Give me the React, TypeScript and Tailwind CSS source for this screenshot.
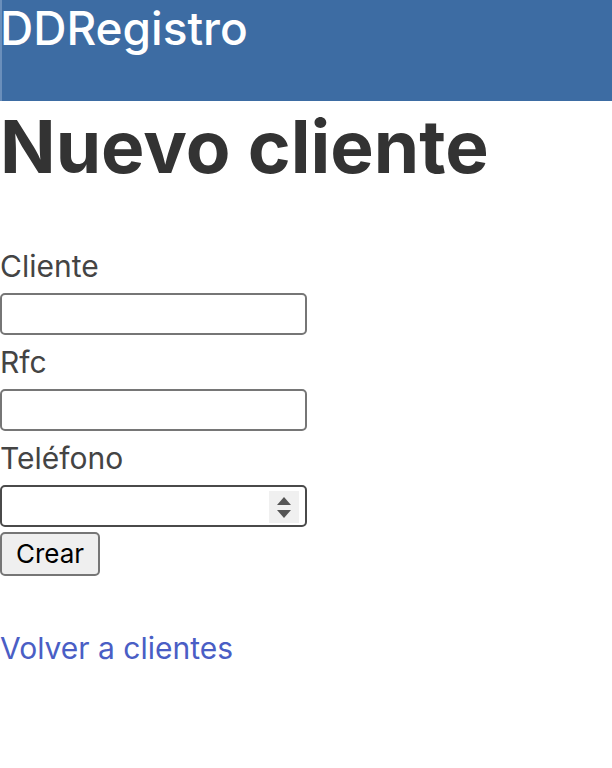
import React from "react";

export default function App() {
  const font = { fontFamily: "Inter, 'Noto Sans', sans-serif" };
  return (
    <div className="min-h-screen bg-white" style={font}>
      <header className="h-[101px] bg-[#3d6ca3] shadow-[inset_2px_0_0_#6b8fbb]">
        <span className="block text-[46px] leading-[56px] font-medium text-white">DDRegistro</span>
      </header>
      <h1 className="text-[73px] font-bold text-[#333333] leading-[92px]">Nuevo cliente</h1>
      <form className="mt-[51px] flex flex-col items-start">
        <label className="text-[30px] leading-[44px] text-[#444444]">Cliente</label>
        <input className="w-[307px] h-[42px] border-2 border-[#767676] rounded-[5px] mt-[5px]" />
        <label className="text-[30px] leading-[44px] text-[#444444] mt-[5px]">Rfc</label>
        <input className="w-[307px] h-[42px] border-2 border-[#767676] rounded-[5px] mt-[5px]" />
        <label className="text-[30px] leading-[44px] text-[#444444] mt-[5px]">Teléfono</label>
        <div className="relative w-[307px] h-[42px] border-2 border-[#4a4a4a] rounded-[5px] mt-[5px]">
          <div className="absolute right-[6px] top-[4px] w-[30px] h-[32px] bg-[#f0f0f0] flex flex-col items-center justify-center gap-[5px]">
            <svg width="14" height="8" viewBox="0 0 14 8"><path d="M7 0 L14 8 L0 8 Z" fill="#555" /></svg>
            <svg width="14" height="8" viewBox="0 0 14 8"><path d="M0 0 L14 0 L7 8 Z" fill="#555" /></svg>
          </div>
        </div>
        <button type="button" className="mt-[5px] w-[100px] h-[44px] bg-[#efefef] border-2 border-[#767676] rounded-[5px] text-[26px] leading-[40px] text-black">Crear</button>
      </form>
      <a href="#" className="block mt-[50px] text-[30px] leading-[44px] text-[#4a5ec5]">Volver a clientes</a>
    </div>
  );
}
